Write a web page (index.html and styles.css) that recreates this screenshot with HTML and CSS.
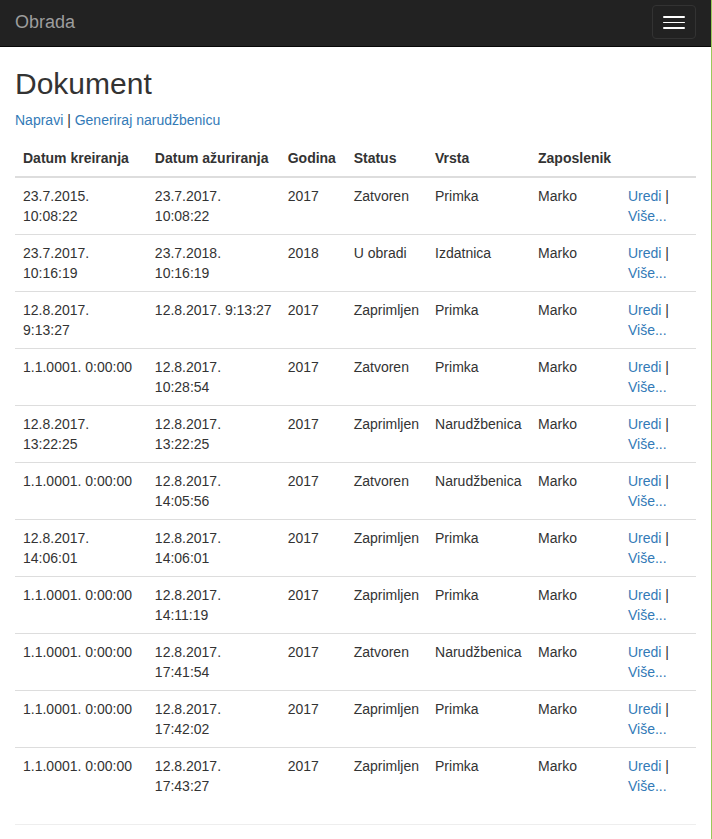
FILE: index.html
```html
<!DOCTYPE html>
<html>
<head>
<meta charset="utf-8">
<title>Dokument</title>
<link rel="stylesheet" href="styles.css">
</head>
<body>
<div class="navbar">
  <a class="brand" href="#">Obrada</a>
  <button class="toggle" type="button"><span class="bar"></span><span class="bar"></span><span class="bar"></span></button>
</div>
<div class="container">
  <h2 class="title">Dokument</h2>
  <p class="actions"><a href="#">Napravi</a> | <a href="#">Generiraj narudžbenicu</a></p>
  <table class="table">
    <thead>
      <tr>
        <th class="c1">Datum kreiranja</th>
        <th class="c2">Datum ažuriranja</th>
        <th class="c3">Godina</th>
        <th class="c4">Status</th>
        <th class="c5">Vrsta</th>
        <th class="c6">Zaposlenik</th>
        <th class="c7"></th>
      </tr>
    </thead>
    <tbody>
      <tr><td>23.7.2015. 10:08:22</td><td>23.7.2017. 10:08:22</td><td>2017</td><td>Zatvoren</td><td>Primka</td><td>Marko</td><td><a href="#">Uredi</a> | <a href="#">Više...</a></td></tr>
      <tr><td>23.7.2017. 10:16:19</td><td>23.7.2018. 10:16:19</td><td>2018</td><td>U obradi</td><td>Izdatnica</td><td>Marko</td><td><a href="#">Uredi</a> | <a href="#">Više...</a></td></tr>
      <tr><td>12.8.2017. 9:13:27</td><td>12.8.2017. 9:13:27</td><td>2017</td><td>Zaprimljen</td><td>Primka</td><td>Marko</td><td><a href="#">Uredi</a> | <a href="#">Više...</a></td></tr>
      <tr><td>1.1.0001. 0:00:00</td><td>12.8.2017. 10:28:54</td><td>2017</td><td>Zatvoren</td><td>Primka</td><td>Marko</td><td><a href="#">Uredi</a> | <a href="#">Više...</a></td></tr>
      <tr><td>12.8.2017. 13:22:25</td><td>12.8.2017. 13:22:25</td><td>2017</td><td>Zaprimljen</td><td>Narudžbenica</td><td>Marko</td><td><a href="#">Uredi</a> | <a href="#">Više...</a></td></tr>
      <tr><td>1.1.0001. 0:00:00</td><td>12.8.2017. 14:05:56</td><td>2017</td><td>Zatvoren</td><td>Narudžbenica</td><td>Marko</td><td><a href="#">Uredi</a> | <a href="#">Više...</a></td></tr>
      <tr><td>12.8.2017. 14:06:01</td><td>12.8.2017. 14:06:01</td><td>2017</td><td>Zaprimljen</td><td>Primka</td><td>Marko</td><td><a href="#">Uredi</a> | <a href="#">Više...</a></td></tr>
      <tr><td>1.1.0001. 0:00:00</td><td>12.8.2017. 14:11:19</td><td>2017</td><td>Zaprimljen</td><td>Primka</td><td>Marko</td><td><a href="#">Uredi</a> | <a href="#">Više...</a></td></tr>
      <tr><td>1.1.0001. 0:00:00</td><td>12.8.2017. 17:41:54</td><td>2017</td><td>Zatvoren</td><td>Narudžbenica</td><td>Marko</td><td><a href="#">Uredi</a> | <a href="#">Više...</a></td></tr>
      <tr><td>1.1.0001. 0:00:00</td><td>12.8.2017. 17:42:02</td><td>2017</td><td>Zaprimljen</td><td>Primka</td><td>Marko</td><td><a href="#">Uredi</a> | <a href="#">Više...</a></td></tr>
      <tr><td>1.1.0001. 0:00:00</td><td>12.8.2017. 17:43:27</td><td>2017</td><td>Zaprimljen</td><td>Primka</td><td>Marko</td><td><a href="#">Uredi</a> | <a href="#">Više...</a></td></tr>
    </tbody>
  </table>
  <hr class="rule">
</div>
</body>
</html>
```
FILE: styles.css
```css
html {
  background: #9bc95a;
}
body {
  margin: 0 1px 0 0;
  min-height: 100vh;
  background: #fff;
  font-family: "Liberation Sans", Arial, sans-serif;
  font-size: 14px;
  line-height: 20px;
  color: #333;
}
a {
  color: #337ab7;
  text-decoration: none;
}
.navbar {
  box-sizing: border-box;
  height: 47px;
  background: #222;
  border-bottom: 1px solid #080808;
  display: flex;
  align-items: flex-start;
  justify-content: space-between;
  padding: 0 15px;
}
.brand {
  color: #9d9d9d;
  font-size: 18px;
  line-height: 20px;
  padding-top: 12px;
}
.toggle {
  box-sizing: border-box;
  margin-top: 5px;
  width: 44px;
  height: 34px;
  padding: 10px 10px 9px;
  background: transparent;
  border: 1px solid #333;
  border-radius: 4px;
  display: flex;
  flex-direction: column;
  gap: 4px;
  align-items: center;
}
.bar {
  display: block;
  width: 22px;
  height: 2px;
  background: #fff;
  border-radius: 1px;
}
.container {
  padding: 0 15px;
}
.title {
  font-size: 30px;
  font-weight: 500;
  line-height: 33px;
  margin: 20px 0 10px;
}
.actions {
  margin: 0 0 10px;
}
.table {
  width: 100%;
  border-collapse: collapse;
  border-spacing: 0;
  margin-bottom: 20px;
}
.table th,
.table td {
  padding: 8px;
  text-align: left;
  vertical-align: top;
  line-height: 20px;
}
.table th {
  font-weight: bold;
  border-bottom: 2px solid #ddd;
  vertical-align: bottom;
}
.table td {
  border-top: 1px solid #ddd;
}
.c1 { width: 116px; }
.c2 { width: 117px; }
.c3 { width: 50px; }
.c4 { width: 65px; }
.c5 { width: 87px; }
.c6 { width: 74px; }
.c7 { width: 60px; }
.rule {
  margin: 20px 0;
  border: 0;
  border-top: 1px solid #eee;
  height: 0;
}
```
